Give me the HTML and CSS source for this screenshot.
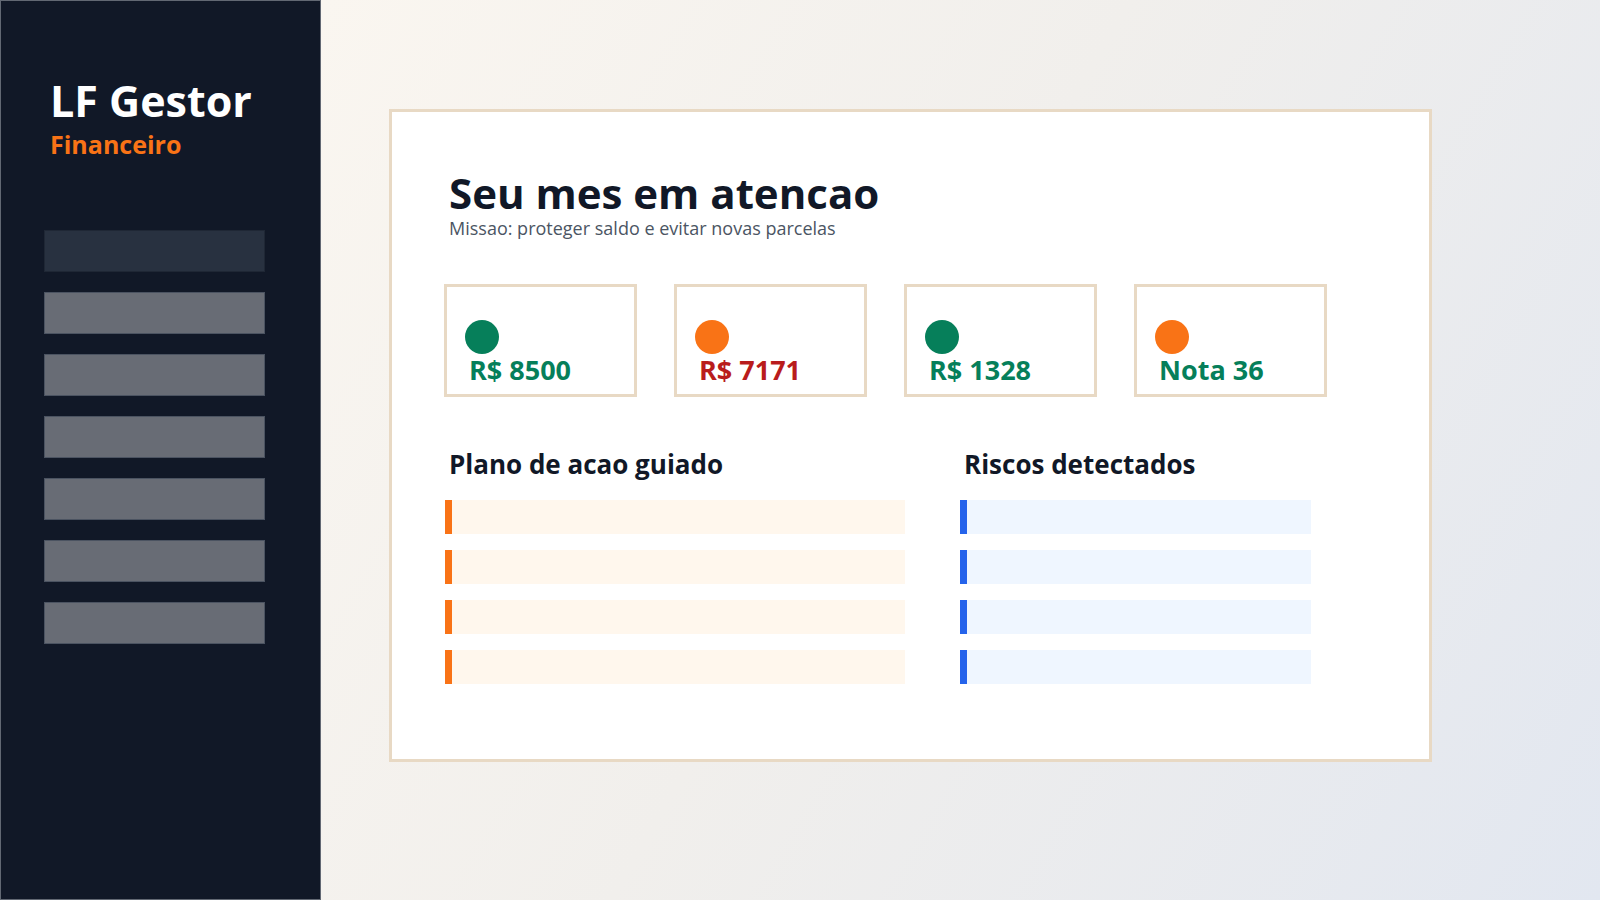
FILE: index.html
```html
<!DOCTYPE html>
<html lang="pt-BR">
<head>
  <meta charset="UTF-8">
  <meta name="viewport" content="width=device-width, initial-scale=1.0">
  <title>LF Gestor Financeiro</title>
  <link rel="stylesheet" href="styles.css">
</head>
<body>
  <div class="app">
    <!-- Sidebar -->
    <aside class="sidebar">
      <div class="brand">
        <div class="brand-name">LF Gestor</div>
        <div class="brand-sub">Financeiro</div>
      </div>
      <nav class="nav">
        <div class="nav-item active"></div>
        <div class="nav-item"></div>
        <div class="nav-item"></div>
        <div class="nav-item"></div>
        <div class="nav-item"></div>
        <div class="nav-item"></div>
        <div class="nav-item"></div>
      </nav>
    </aside>

    <!-- Main -->
    <main class="main">
      <section class="panel">
        <h1 class="panel-title">Seu mes em atencao</h1>
        <p class="panel-sub">Missao: proteger saldo e evitar novas parcelas</p>

        <div class="kpis">
          <div class="kpi">
            <span class="dot green"></span>
            <div class="kpi-value good">R$ 8500</div>
          </div>
          <div class="kpi">
            <span class="dot orange"></span>
            <div class="kpi-value bad">R$ 7171</div>
          </div>
          <div class="kpi">
            <span class="dot green"></span>
            <div class="kpi-value good">R$ 1328</div>
          </div>
          <div class="kpi">
            <span class="dot orange"></span>
            <div class="kpi-value good">Nota 36</div>
          </div>
        </div>

        <div class="columns">
          <div class="column">
            <h2 class="column-title">Plano de acao guiado</h2>
            <div class="bar plan"></div>
            <div class="bar plan"></div>
            <div class="bar plan"></div>
            <div class="bar plan"></div>
          </div>
          <div class="column">
            <h2 class="column-title">Riscos detectados</h2>
            <div class="bar risk"></div>
            <div class="bar risk"></div>
            <div class="bar risk"></div>
            <div class="bar risk"></div>
          </div>
        </div>
      </section>
    </main>
  </div>
</body>
</html>
```

FILE: styles.css
```css
* {
  box-sizing: border-box;
}

body {
  margin: 0;
  padding: 0;
  font-family: "Open Sans", "Noto Sans", Arial, sans-serif;
  color: #111827;
}

.app {
  display: flex;
  height: 900px;
  overflow: hidden;
}

.sidebar {
  width: 321px;
  flex-shrink: 0;
  height: 900px;
  background-color: #111827;
  border: 1px solid #626873;
  padding: 0 0 0 43px;
}

.brand {
  padding: 75px 0 0 6px;
}

.brand-name {
  font-size: 43px;
  line-height: 50px;
  font-weight: 700;
  color: #ffffff;
}

.brand-sub {
  margin-top: 3px;
  font-size: 25px;
  line-height: 30px;
  font-weight: 700;
  color: #f97316;
}

.nav {
  margin-top: 71px;
  display: flex;
  flex-direction: column;
  gap: 20px;
}

.nav-item {
  width: 221px;
  height: 42px;
  background-color: #686c75;
  border: 1px solid #4b5361;
}

.nav-item.active {
  background-color: #283140;
  border-color: #1f2735;
}

.main {
  flex: 1;
  padding: 109px 0 0 68px;
  background: linear-gradient(120deg, #faf6f0 0%, #f1efec 45%, #e2e7f0 100%);
}

.panel {
  width: 1043px;
  background: #ffffff;
  border: 3px solid #e8d9c4;
  padding: 57px 0 75px 52px;
}

.panel-title {
  margin: 0 0 0 5px;
  font-size: 42px;
  line-height: 48px;
  font-weight: 700;
  color: #111827;
}

.panel-sub {
  margin: 0 0 0 5px;
  font-size: 18px;
  line-height: 22px;
  color: #4b5563;
}

.kpis {
  display: flex;
  gap: 37px;
  margin-top: 45px;
}

.kpi {
  width: 193px;
  height: 113px;
  border: 3px solid #e8d9c4;
  padding: 33px 0 0 18px;
}

.dot {
  display: block;
  width: 34px;
  height: 34px;
  border-radius: 50%;
}

.dot.green {
  background-color: #067f5a;
}

.dot.orange {
  background-color: #f97316;
}

.kpi-value {
  margin-top: 1px;
  padding-left: 4px;
  font-size: 27px;
  line-height: 30px;
  font-weight: 700;
}

.kpi-value.good {
  color: #067f5a;
}

.kpi-value.bad {
  color: #b91c1c;
}

.columns {
  display: grid;
  grid-template-columns: 460px 351px;
  gap: 55px;
  margin-top: 51px;
  margin-left: 1px;
}

.column {
  display: flex;
  flex-direction: column;
  gap: 16px;
}

.column-title {
  margin: 0 0 4px 4px;
  font-size: 26px;
  line-height: 32px;
  font-weight: 700;
  color: #111827;
}

.bar {
  height: 34px;
}

.bar.plan {
  background-color: #fff7ed;
  border-left: 7px solid #f97316;
}

.bar.risk {
  background-color: #eff6ff;
  border-left: 7px solid #2563eb;
}
```
